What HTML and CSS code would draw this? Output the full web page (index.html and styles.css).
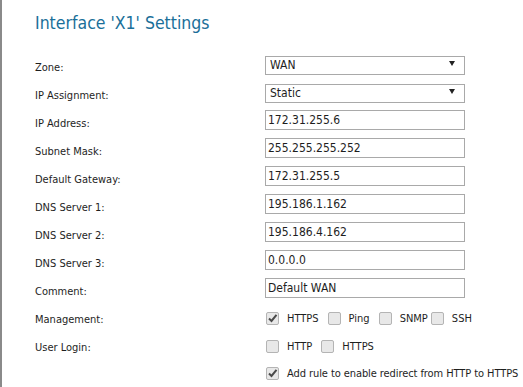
FILE: index.html
```html
<!DOCTYPE html>
<html lang="en">

<head>
    <meta charset="UTF-8">
    <title>Interface 'X1' Settings</title>
    <link rel="stylesheet" href="styles.css">
</head>

<body>
    <h1>Interface 'X1' Settings</h1>

    <div class="form">
        <div class="row">
            <label>Zone:</label>
            <div class="select-wrap">
                <select><option>WAN</option></select>
            </div>
        </div>
        <div class="row">
            <label>IP Assignment:</label>
            <div class="select-wrap">
                <select><option>Static</option></select>
            </div>
        </div>
        <div class="row">
            <label>IP Address:</label>
            <input type="text" value="172.31.255.6">
        </div>
        <div class="row">
            <label>Subnet Mask:</label>
            <input type="text" value="255.255.255.252">
        </div>
        <div class="row">
            <label>Default Gateway:</label>
            <input type="text" value="172.31.255.5">
        </div>
        <div class="row">
            <label>DNS Server 1:</label>
            <input type="text" value="195.186.1.162">
        </div>
        <div class="row">
            <label>DNS Server 2:</label>
            <input type="text" value="195.186.4.162">
        </div>
        <div class="row">
            <label>DNS Server 3:</label>
            <input type="text" value="0.0.0.0">
        </div>
        <div class="row">
            <label>Comment:</label>
            <input type="text" value="Default WAN">
        </div>

        <div class="row check-row first">
            <label>Management:</label>
            <div class="checks">
                <span class="box checked"><svg width="11" height="11" viewBox="0 0 11 11"><path d="M2 5.5 L4.5 8 L9.5 1.8" fill="none" stroke="#4a4a4a" stroke-width="2"/></svg></span>
                <span class="opt">HTTPS</span>
                <span class="box"></span>
                <span class="opt">Ping</span>
                <span class="box"></span>
                <span class="opt tight">SNMP</span>
                <span class="box"></span>
                <span class="opt">SSH</span>
            </div>
        </div>
        <div class="row check-row">
            <label>User Login:</label>
            <div class="checks">
                <span class="box"></span>
                <span class="opt">HTTP</span>
                <span class="box"></span>
                <span class="opt">HTTPS</span>
            </div>
        </div>
        <div class="row check-row last">
            <label></label>
            <div class="checks">
                <span class="box checked"><svg width="11" height="11" viewBox="0 0 11 11"><path d="M2 5.5 L4.5 8 L9.5 1.8" fill="none" stroke="#4a4a4a" stroke-width="2"/></svg></span>
                <span class="opt long">Add rule to enable redirect from HTTP to HTTPS</span>
            </div>
        </div>
    </div>
</body>

</html>
```

FILE: styles.css
```css
body {
    margin: 0;
    padding: 0 0 0 33px;
    border-left: 2px solid #8a8a8a;
    min-height: 387px;
    box-sizing: border-box;
    overflow: hidden;
    background: #fff;
    font-family: 'DejaVu Sans Condensed', 'Liberation Sans', sans-serif;
    color: #1e1e1e;
}

h1 {
    margin: 0;
    padding-top: 13px;
    height: 54px;
    box-sizing: border-box;
    font-size: 17.5px;
    font-weight: normal;
    line-height: 20px;
    color: #1a6f99;
}

.form {
    display: flex;
    flex-direction: column;
}

.row {
    display: flex;
    align-items: flex-start;
    height: 28px;
}

.row label {
    flex: none;
    width: 230px;
    padding-top: 7px;
    font-size: 11px;
    line-height: 13px;
}

.select-wrap {
    position: relative;
    width: 200px;
}

.select-wrap::after {
    content: '';
    position: absolute;
    right: 10px;
    top: 7px;
    border-left: 3px solid transparent;
    border-right: 3px solid transparent;
    border-top: 5px solid #222;
}

select {
    appearance: none;
    -webkit-appearance: none;
    width: 200px;
    height: 19px;
    margin: 0;
    padding: 0 0 0 4px;
    border: 1px solid #a9a9a9;
    border-radius: 0;
    background: #fff;
    font-family: inherit;
    font-size: 12px;
    color: #1e1e1e;
}

input[type="text"] {
    width: 200px;
    height: 20px;
    margin: 0;
    padding: 0 2px;
    box-sizing: border-box;
    border: 1px solid #a9a9a9;
    border-radius: 0;
    font-family: inherit;
    font-size: 12px;
    color: #1e1e1e;
}

.check-row {
    align-items: center;
}

.check-row label {
    padding-top: 2px;
}

.check-row.first {
    margin-top: -2px;
}

.check-row.last {
    height: 26px;
}

.checks {
    display: flex;
    align-items: center;
    white-space: nowrap;
    font-size: 11px;
}

.box {
    flex: none;
    display: inline-flex;
    align-items: center;
    justify-content: center;
    width: 11px;
    height: 11px;
    margin-left: 1px;
    border: 1px solid #b4b4b4;
    border-radius: 2px;
    background: #e8e8e8;
}

.opt {
    margin-left: 8px;
    margin-right: 8px;
}

.opt.tight {
    margin-right: 2px;
}

.opt.long {
    letter-spacing: -0.08px;
}
```
